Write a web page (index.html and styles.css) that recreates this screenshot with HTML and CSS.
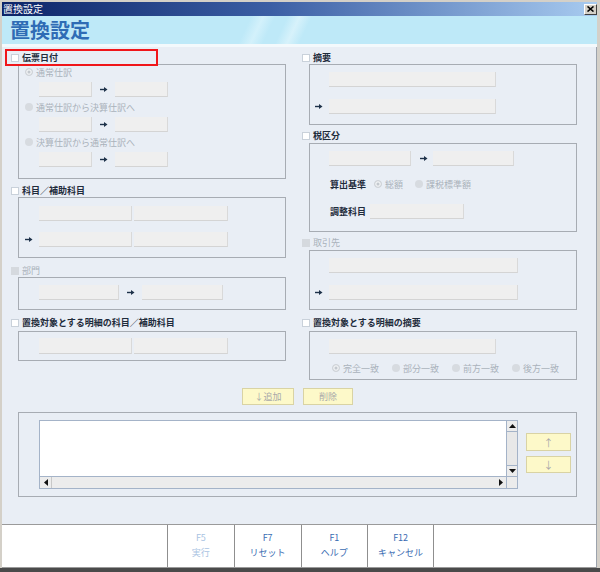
FILE: index.html
```html
<!DOCTYPE html>
<html lang="ja">
<head>
<meta charset="utf-8">
<title>置換設定</title>
<link rel="stylesheet" href="styles.css">
</head>
<body>
<div class="window">
  <div class="titlebar">
    <span class="ttext">置換設定</span>
    <span class="close"><svg width="7" height="6" viewBox="0 0 7 6"><path d="M0.5 0.5L6.5 5.5M6.5 0.5L0.5 5.5" stroke="#000" stroke-width="1.6"/></svg></span>
  </div>
  <div class="header"><h1>置換設定</h1></div>
  <div class="main">
    <div class="cols">
      <div class="col">
        <div class="sec mb8">
          <div class="sh"><span class="cb"></span><span class="lbl">伝票日付</span><span class="redbox"></span></div>
          <div class="grp g-date">
            <div class="rrow"><span class="radio on"></span><span class="dis">通常仕訳</span></div>
            <div class="irow"><span class="inp w53"></span><span class="arr"><svg width="8" height="7" viewBox="0 0 8 7"><path d="M0 3.5H5" stroke="#1d3149" stroke-width="1.4"/><path d="M4 1L7.5 3.5L4 6Z" fill="#1d3149"/></svg></span><span class="inp w53"></span></div>
            <div class="rrow mt5"><span class="radio"></span><span class="dis">通常仕訳から決算仕訳へ</span></div>
            <div class="irow"><span class="inp w53"></span><span class="arr"><svg width="8" height="7" viewBox="0 0 8 7"><path d="M0 3.5H5" stroke="#1d3149" stroke-width="1.4"/><path d="M4 1L7.5 3.5L4 6Z" fill="#1d3149"/></svg></span><span class="inp w53"></span></div>
            <div class="rrow mt5"><span class="radio"></span><span class="dis">決算仕訳から通常仕訳へ</span></div>
            <div class="irow"><span class="inp w53"></span><span class="arr"><svg width="8" height="7" viewBox="0 0 8 7"><path d="M0 3.5H5" stroke="#1d3149" stroke-width="1.4"/><path d="M4 1L7.5 3.5L4 6Z" fill="#1d3149"/></svg></span><span class="inp w53"></span></div>
          </div>
        </div>
        <div class="sec mb9">
          <div class="sh"><span class="cb"></span><span class="lbl">科目／補助科目</span></div>
          <div class="grp g-kamoku">
            <div class="prow"><span class="aslot"></span><span class="inp w93"></span><span class="inp w94 ml2"></span></div>
            <div class="prow mt11"><span class="aslot"><svg width="8" height="7" viewBox="0 0 8 7"><path d="M0 3.5H5" stroke="#1d3149" stroke-width="1.4"/><path d="M4 1L7.5 3.5L4 6Z" fill="#1d3149"/></svg></span><span class="inp w93"></span><span class="inp w94 ml2"></span></div>
          </div>
        </div>
        <div class="sec mb9">
          <div class="sh"><span class="cb off"></span><span class="lbl dis">部門</span></div>
          <div class="grp g-bumon">
            <div class="prow"><span class="aslot"></span><span class="inp w80"></span><span class="arr"><svg width="8" height="7" viewBox="0 0 8 7"><path d="M0 3.5H5" stroke="#1d3149" stroke-width="1.4"/><path d="M4 1L7.5 3.5L4 6Z" fill="#1d3149"/></svg></span><span class="inp w81"></span></div>
          </div>
        </div>
        <div class="sec">
          <div class="sh mb4"><span class="cb"></span><span class="lbl">置換対象とする明細の科目／補助科目</span></div>
          <div class="grp g-target">
            <div class="prow"><span class="aslot"></span><span class="inp w93 h16"></span><span class="inp w94 h16 ml2"></span></div>
          </div>
        </div>
      </div>

      <div class="col">
        <div class="sec mb7">
          <div class="sh"><span class="cb"></span><span class="lbl">摘要</span></div>
          <div class="grp r g-tekiyo">
            <div class="prow"><span class="aslot"></span><span class="inp w167"></span></div>
            <div class="prow mt12"><span class="aslot"><svg width="8" height="7" viewBox="0 0 8 7"><path d="M0 3.5H5" stroke="#1d3149" stroke-width="1.4"/><path d="M4 1L7.5 3.5L4 6Z" fill="#1d3149"/></svg></span><span class="inp w167"></span></div>
          </div>
        </div>
        <div class="sec mb7">
          <div class="sh mb3"><span class="cb"></span><span class="lbl">税区分</span></div>
          <div class="grp r g-tax">
            <div class="prow"><span class="aslot"></span><span class="inp w82"></span><span class="arr tax"><svg width="8" height="7" viewBox="0 0 8 7"><path d="M0 3.5H5" stroke="#1d3149" stroke-width="1.4"/><path d="M4 1L7.5 3.5L4 6Z" fill="#1d3149"/></svg></span><span class="inp w81"></span></div>
            <div class="frow mt10 h16r">
              <span class="flbl">算出基準</span>
              <span class="radio on ml4"></span><span class="dis ml3">総額</span>
              <span class="radio ml12"></span><span class="dis ml3">課税標準額</span>
            </div>
            <div class="frow mt12">
              <span class="flbl">調整科目</span>
              <span class="inp w94"></span>
            </div>
          </div>
        </div>
        <div class="sec mb9">
          <div class="sh mb3"><span class="cb off"></span><span class="lbl dis">取引先</span></div>
          <div class="grp r g-tori">
            <div class="prow"><span class="aslot"></span><span class="inp w189"></span></div>
            <div class="prow mt12"><span class="aslot"><svg width="8" height="7" viewBox="0 0 8 7"><path d="M0 3.5H5" stroke="#1d3149" stroke-width="1.4"/><path d="M4 1L7.5 3.5L4 6Z" fill="#1d3149"/></svg></span><span class="inp w189"></span></div>
          </div>
        </div>
        <div class="sec">
          <div class="sh mb4"><span class="cb"></span><span class="lbl">置換対象とする明細の摘要</span></div>
          <div class="grp r g-ttek">
            <div class="prow"><span class="aslot"></span><span class="inp w167"></span></div>
            <div class="mrow">
              <span class="mitem"><span class="radio on"></span><span class="dis">完全一致</span></span>
              <span class="mitem"><span class="radio"></span><span class="dis">部分一致</span></span>
              <span class="mitem"><span class="radio"></span><span class="dis">前方一致</span></span>
              <span class="mitem"><span class="radio"></span><span class="dis">後方一致</span></span>
            </div>
          </div>
        </div>
      </div>
    </div>

    <div class="actions">
      <span class="ybtn add">↓追加</span>
      <span class="ybtn del">削除</span>
    </div>

    <div class="listgrp">
      <div class="listbox">
        <div class="lb-area"></div>
        <div class="vscroll">
          <span class="sbb"><svg width="7" height="4" viewBox="0 0 7 4"><path d="M0 4L3.5 0L7 4Z" fill="#111"/></svg></span>
          <span class="vthumb"></span>
          <span class="sbb"><svg width="7" height="4" viewBox="0 0 7 4"><path d="M0 0L3.5 4L7 0Z" fill="#111"/></svg></span>
        </div>
        <div class="hscroll">
          <span class="sbb h"><svg width="4" height="7" viewBox="0 0 4 7"><path d="M4 0L0 3.5L4 7Z" fill="#111"/></svg></span>
          <span class="htrack"></span>
          <span class="sbb h"><svg width="4" height="7" viewBox="0 0 4 7"><path d="M0 0L4 3.5L0 7Z" fill="#111"/></svg></span>
        </div>
        <div class="corner"></div>
      </div>
      <div class="updown">
        <span class="ybtn ud1">↑</span>
        <span class="ybtn ud2">↓</span>
      </div>
    </div>
  </div>
  <div class="footer">
    <div class="fbtns">
      <div class="fbtn off"><span>F5</span><span>実行</span></div>
      <div class="fbtn"><span>F7</span><span>リセット</span></div>
      <div class="fbtn"><span>F1</span><span>ヘルプ</span></div>
      <div class="fbtn last"><span>F12</span><span>キャンセル</span></div>
    </div>
  </div>
</div>
</body>
</html>
```
FILE: styles.css
```css
* { box-sizing: border-box; margin: 0; padding: 0; }
html, body { width: 600px; height: 572px; overflow: hidden; }
body {
  font-family: "Noto Sans CJK JP", "Noto Sans", sans-serif;
  font-size: 9px;
  background: #d4d0c8;
  color: #1d2a3a;
}
.window {
  width: 600px; height: 572px;
  display: flex; flex-direction: column;
  padding: 2px 3px 0 2px;
  background: #d4d0c8;
  border-bottom: 4px solid #4a4a4a;
}
.titlebar {
  height: 14px;
  display: flex; align-items: center; justify-content: space-between;
  background: linear-gradient(90deg, #0c2468 0%, #3b5ea4 45%, #a8cbf0 100%);
  color: #fff;
  padding-left: 1px;
}
.ttext { font-size: 10px; line-height: 14px; }
.close {
  width: 13px; height: 11px;
  display: flex; align-items: center; justify-content: center;
  background: #d4d0c8;
  border: 1px solid; border-color: #fff #404040 #404040 #fff;
}
.header {
  height: 31px;
  background: linear-gradient(115deg, #bee9f8 0%, #bee9f8 41%, #d3f1fb 43%, #bee9f8 45%, #bee9f8 47%, #d7f2fb 49%, #bee9f8 51%);
  background-color: #bee9f8;
  border-bottom: 3px solid #f3f9fc;
}
.header h1 {
  font-size: 20px; font-weight: 700; color: #2f6cb5;
  line-height: 28px; padding-left: 8px;
}
.main {
  flex: 1;
  background: #e9eef5;
  padding: 7px 0 0 9px;
  border-right: 1px solid #9ca3ad;
}
.cols { display: flex; gap: 16px; }
.col { width: 275px; display: flex; flex-direction: column; }
.mb7 { margin-bottom: 7px; }
.mb8 { margin-bottom: 8px; }
.mb9 { margin-bottom: 9px; }
.sh {
  position: relative;
  height: 8px; display: flex; align-items: center; gap: 3px;
  margin-bottom: 2px;
}
.sh.mb3 { margin-bottom: 3px; }
.sh.mb4 { margin-bottom: 4px; }
.cb {
  width: 8px; height: 8px; background: #fff;
  border: 1px solid #c9d1da; flex: none;
}
.cb.off { background: #d5d9de; border-color: #d5d9de; }
.lbl { font-weight: 700; line-height: 8px; white-space: nowrap; color: #1f2c3c; }
.dis { color: #aab2bb; font-weight: 400; white-space: nowrap; }
.lbl.dis { font-weight: 400; }
.redbox {
  position: absolute; left: -6px; top: -5px;
  width: 153px; height: 17px;
  border: 2px solid #f0161a;
}
.grp {
  margin-left: 7px; width: 268px;
  border: 1px solid #a7acb3;
  padding-left: 6px;
}
.grp.r { padding-left: 5px; }
.g-date { height: 115px; padding-top: 2px; }
.g-kamoku { height: 61px; padding-top: 8px; }
.g-bumon { height: 33px; padding-top: 7px; }
.g-target { height: 30px; padding-top: 6px; }
.g-tekiyo { height: 61px; padding-top: 7px; }
.g-tax { height: 89px; padding-top: 7px; }
.g-tori { height: 60px; padding-top: 7px; }
.g-ttek { height: 49px; padding-top: 7px; }
.rrow { height: 10px; display: flex; align-items: center; gap: 3px; }
.mt5 { margin-top: 5px; }
.mt10 { margin-top: 10px; }
.mt11 { margin-top: 11px; }
.mt12 { margin-top: 12px; }
.ml2 { margin-left: 2px; }
.ml3 { margin-left: 3px; }
.ml4 { margin-left: 4px; }
.ml12 { margin-left: 12px; }
.radio {
  width: 8px; height: 8px; border-radius: 50%;
  background: #d7dbe0; flex: none;
}
.radio.on {
  background: #c3c8ce;
  border: 1px solid #d0d4d9;
  box-shadow: inset 0 0 0 1.5px #eff1f3;
}
.irow { display: flex; align-items: center; margin-top: 5px; padding-left: 14px; }
.prow { display: flex; align-items: center; }
.aslot { width: 14px; flex: none; display: flex; align-items: center; }
.arr { display: flex; align-items: center; margin: 0 7px 0 8px; }
.arr.tax { margin: 0 5px 0 9px; }
.inp {
  height: 15px; background: #efefef; flex: none;
  border-right: 1px solid #d9d9d9; border-bottom: 1px solid #d4d4d4;
}
.h16 { height: 16px; }
.w53 { width: 53px; }
.w80 { width: 80px; }
.w81 { width: 81px; }
.w82 { width: 82px; }
.w93 { width: 93px; }
.w94 { width: 94px; }
.w167 { width: 167px; }
.w189 { width: 189px; }
.frow { display: flex; align-items: center; padding-left: 15px; }
.h16r { height: 16px; }
.flbl { width: 40px; font-weight: 700; color: #1f2c3c; flex: none; }
.mrow { display: flex; align-items: center; height: 12px; margin-top: 8px; padding-left: 17px; }
.mitem { width: 60px; display: flex; align-items: center; gap: 3px; flex: none; }
.actions { display: flex; gap: 9px; margin-top: 8px; margin-left: 231px; }
.ybtn {
  display: flex; align-items: center; justify-content: center;
  background: #fdf9c9; border: 1px solid #d9d3a4;
  color: #a9a9a9; font-size: 9px;
}
.add { width: 52px; height: 17px; }
.del { width: 50px; height: 17px; }
.listgrp {
  margin: 7px 0 0 7px;
  width: 559px; height: 85px;
  border: 1px solid #a7acb3;
  display: flex; padding: 7px 0 0 20px;
}
.listbox {
  width: 479px; height: 69px;
  border: 1px solid #a4b3c8;
  background: #fff;
  display: grid;
  grid-template-columns: 1fr 11px;
  grid-template-rows: 1fr 12px;
}
.lb-area { background: #fff; }
.vscroll {
  display: flex; flex-direction: column;
  background: #ececec;
  border-left: 1px solid #a4b3c8;
}
.sbb {
  height: 10px; display: flex; align-items: center; justify-content: center;
  background: #ececec; flex: none;
}
.sbb.h { width: 11px; height: auto; }
.vthumb {
  flex: 1; border-top: 1px solid #a4b3c8; border-bottom: 1px solid #a4b3c8;
  background: #e8e8e8;
}
.hscroll {
  display: flex; background: #ececec;
  border-top: 1px solid #a4b3c8;
}
.htrack { flex: 1; border-left: 1px solid #c8c8c8; }
.corner { background: #ececec; border-top: 1px solid #a4b3c8; border-left: 1px solid #a4b3c8; }
.updown { display: flex; flex-direction: column; gap: 5px; margin: 13px 0 0 8px; }
.ud1 { width: 45px; height: 18px; font-size: 10px; }
.ud2 { width: 45px; height: 17px; font-size: 10px; }
.footer {
  height: 44px; flex: none; background: #fff;
  border-top: 1px solid #9a9a9a;
  border-bottom: 1px solid #9a9a9a;
  border-right: 1px solid #9ca3ad;
  padding-left: 165px;
}
.fbtns { display: flex; height: 100%; }
.fbtn {
  width: 66.75px; border-left: 1px solid #8f8f8f;
  display: flex; flex-direction: column; align-items: center;
  padding-top: 5px; color: #3a6cb2;
}
.fbtn span { line-height: 15px; font-size: 9px; }
.fbtn.off { color: #a9c3e2; }
.fbtn.last { border-right: 1px solid #8f8f8f; }
```
